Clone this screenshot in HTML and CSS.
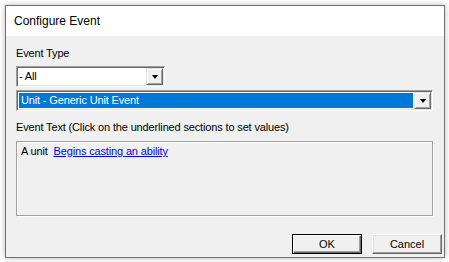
FILE: index.html
```html
<!DOCTYPE html>
<html>
<head>
<meta charset="utf-8">
<link rel="stylesheet" href="styles.css">
</head>
<body>
<div class="window">
  <div class="titlebar">Configure Event</div>
  <div class="content">
    <div class="label first">Event Type</div>
    <div class="combo combo-small">
      <div class="field"><span class="value">- All</span></div>
      <div class="drop"><span class="arrow"></span></div>
    </div>
    <div class="combo combo-wide">
      <div class="field"><span class="value selected">Unit - Generic Unit Event</span></div>
      <div class="drop"><span class="arrow"></span></div>
    </div>
    <div class="label second">Event Text (Click on the underlined sections to set values)</div>
    <div class="textbox">A unit <a class="link" href="#">Begins casting an ability</a></div>
    <div class="buttons">
      <button class="btn default">OK</button>
      <button class="btn">Cancel</button>
    </div>
  </div>
</div>
</body>
</html>
```

FILE: styles.css
```css
html, body {
  margin: 0;
  padding: 0;
  background: #ffffff;
}
body {
  padding: 5px;
  font-family: "Liberation Sans", Arial, sans-serif;
  font-size: 11px;
  color: #000;
}
.window {
  width: 438px;
  height: 251px;
  border: 1px solid #707070;
  background: #f0f0f0;
  box-shadow: 0 0 6px rgba(0,0,0,0.28);
  display: flex;
  flex-direction: column;
}
.titlebar {
  height: 30px;
  background: #ffffff;
  font-size: 12px;
  line-height: 30px;
  padding-left: 8px;
  flex: none;
}
.content {
  padding: 0 11px 0 10px;
  display: flex;
  flex-direction: column;
  letter-spacing: -0.15px;
}
.label {
  line-height: 13px;
  height: 13px;
}
.label.first { margin-top: 11px; }
.label.second { margin-top: 10px; }
.combo {
  display: flex;
  height: 21px;
  box-sizing: border-box;
  border-top: 1px solid #a0a0a0;
  border-left: 1px solid #a0a0a0;
  border-right: 1px solid #ffffff;
  border-bottom: 1px solid #ffffff;
  box-shadow: inset 1px 1px 0 #696969, inset -1px -1px 0 #e3e3e3;
  background: #fff;
  padding: 2px;
}
.combo-small {
  width: 149px;
  margin-top: 6px;
}
.combo-wide {
  width: 417px;
  margin-top: 3px;
}
.field {
  flex: 1;
  display: flex;
  align-items: center;
  overflow: hidden;
  padding-right: 1px;
}
.value {
  white-space: nowrap;
  line-height: 15px;
  padding-left: 0;
}
.combo-wide .field .value {
  flex: 1;
  height: 15px;
}
.value.selected {
  background: #0078d7;
  color: #fff;
  padding-left: 2px;
}
.drop {
  width: 17px;
  flex: none;
  box-sizing: border-box;
  background: #f0f0f0;
  border-top: 1px solid #e3e3e3;
  border-left: 1px solid #e3e3e3;
  border-right: 1px solid #696969;
  border-bottom: 1px solid #696969;
  box-shadow: inset 1px 1px 0 #ffffff, inset -1px -1px 0 #a0a0a0;
  display: flex;
  align-items: center;
  justify-content: center;
  margin: -1px -1px -1px 0;
}
.arrow {
  width: 0;
  height: 0;
  border-left: 3.5px solid transparent;
  border-right: 3.5px solid transparent;
  border-top: 4px solid #000;
  margin-top: 1px;
}
.textbox {
  margin-top: 7px;
  height: 75px;
  box-sizing: border-box;
  border: 1px solid #a0a0a0;
  box-shadow: inset 1px 1px 0 #ffffff, 1px 1px 0 #ffffff;
  padding: 3px 4px;
  line-height: 13px;
}
.link {
  color: #0000ff;
  text-decoration: underline;
  margin-left: 3px;
}
.buttons {
  display: flex;
  justify-content: flex-end;
  gap: 10px;
  margin-top: 18px;
  margin-right: -9px;
  letter-spacing: 0;
}
.btn {
  width: 70px;
  height: 20px;
  box-sizing: border-box;
  margin: 0;
  padding: 0;
  font-family: "Liberation Sans", Arial, sans-serif;
  font-size: 11px;
  color: #000;
  background: #f0f0f0;
  border-top: 1px solid #ffffff;
  border-left: 1px solid #ffffff;
  border-right: 1px solid #696969;
  border-bottom: 1px solid #696969;
  box-shadow: inset -1px -1px 0 #a0a0a0, inset 1px 1px 0 #e3e3e3;
}
.btn.default {
  border: 1px solid #000;
  box-shadow: inset 1px 1px 0 #ffffff, inset -1px -1px 0 #696969, inset -2px -2px 0 #a0a0a0;
}
```
